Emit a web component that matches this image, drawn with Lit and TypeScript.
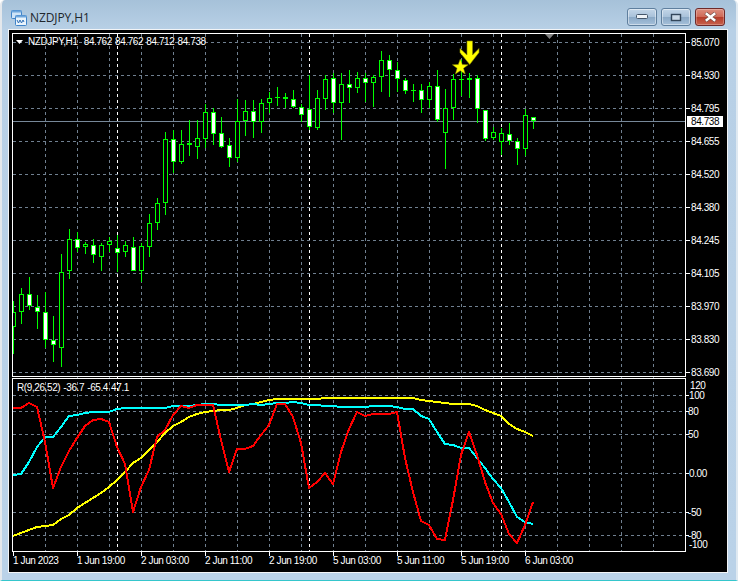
import { LitElement, html, svg, css } from "lit";
import { customElement } from "lit/decorators.js";

// [wickTop, wickBottom, bodyTop, bodyBottom, filled(1)/hollow(0)]
const CANDLES: number[][] = [
  [301,354,312,327,0],[288,324,294,312,0],[277,310,294,306,1],[295,329,307,312,1],[292,348,312,340,1],
  [316,362,340,345,1],[254,367,272,348,0],[229,279,239,271,0],[232,252,239,248,1],[242,254,244,247,0],
  [239,263,245,255,1],[243,271,245,257,0],[237,252,241,245,0],[235,272,248,253,1],[241,257,245,252,0],
  [237,271,247,271,1],[243,282,246,271,0],[214,257,223,247,0],[198,230,203,223,0],[132,215,139,203,0],
  [130,173,139,162,1],[130,164,144,162,0],[120,156,143,145,1],[120,159,138,147,0],[104,148,112,139,0],
  [108,145,112,134,1],[117,148,133,147,1],[138,167,145,158,1],[99,162,121,158,0],[100,136,111,121,0],
  [100,138,111,122,1],[99,133,103,122,0],[92,113,98,103,0],[87,106,97,97,0],[93,108,97,99,1],
  [90,108,99,107,1],[104,122,107,115,1],[75,130,109,127,1],[90,130,98,128,0],[75,110,79,99,0],
  [73,113,78,103,1],[73,140,84,103,0],[70,103,84,88,1],[72,93,78,88,0],[73,102,78,83,1],
  [75,107,77,83,0],[51,92,60,77,0],[55,97,60,70,1],[62,92,70,79,1],[78,94,80,91,1],
  [84,102,90,90,0],[84,113,90,100,1],[82,108,86,100,0],[70,122,86,120,1],[89,169,108,133,0],
  [74,120,79,108,0],[60,96,79,79,0],[73,98,78,80,1],[75,123,78,109,1],[110,141,110,139,1],
  [127,140,132,138,0],[128,155,133,142,0],[123,145,134,141,1],[138,165,141,149,1],[109,156,115,149,0],
  [117,129,117,121,1],
];

const RED = [408,408,403,407,442,488,467,451,438,426,420,419,422,447,464,512,487,470,437,430,415,406,408,405,405,405,440,472,449,449,446,435,425,404,404,417,443,488,482,473,484,452,429,412,416,414,414,414,412,458,492,521,525,539,540,500,455,432,455,482,503,514,534,543,525,502];
const CYAN = [475,474,462,447,437,437,427,416,415,413,412,412,412,409,408,408,408,408,408,408,406,406,406,405,404,404,405,405,405,405,404,405,404,403,403,402,403,405,405,406,406,407,407,407,407,406,406,406,407,409,409,416,419,432,444,445,448,448,458,468,479,488,502,517,522,524];
const YELLOW = [536,533,530,527,526,525,519,515,508,503,498,493,487,480,472,463,458,450,442,433,426,422,417,414,412,411,410,410,408,405,404,402,400,399,399,399,399,399,399,398,398,398,398,398,398,398,398,398,398,398,398,400,401,402,403,404,404,404,406,410,413,416,424,429,432,436];

const xOf = (k: number) => 13 + 8 * k;
const VERT: number[] = Array.from({ length: 20 }, (_, i) => 45 + 32 * i);
const SEP = [117, 309, 501];
const PRICES: [string, number][] = [
  ["85.070",42],["84.930",75],["84.795",108],["84.655",141],["84.520",174],["84.380",207],
  ["84.245",240],["84.105",273],["83.970",306],["83.830",339],["83.690",372],
];
const SUB_GRID = [395, 411, 434, 473, 512, 535];
const SUB_LABELS: [string, number, number][] = [
  ["120",385,690],["100",395,689],["80",411,688],["50",434,688],["0.00",473,689],
  ["-50",512,688],["-80",535,688],["-100",544,689],
];
const TIMES: [string, number][] = [
  ["1 Jun 2023",13],["1 Jun 19:00",77],["2 Jun 03:00",141],["2 Jun 11:00",205],["2 Jun 19:00",269],
  ["5 Jun 03:00",333],["5 Jun 11:00",397],["5 Jun 19:00",461],["6 Jun 03:00",525],
];

const pts = (ys: number[]) => ys.map((y, k) => `${xOf(k)},${y}`).join(" ");

@customElement("app-root")
export class AppRoot extends LitElement {
  static styles = css`
    :host { display: block; }
    .window {
      width: 738px; height: 581px; box-sizing: border-box;
      display: flex; flex-direction: column;
      background: linear-gradient(180deg, #a6c1d9 0, #b8d0e6 30px, #bad2e8 100%);
      border-left: 2px solid #e4e8ec; border-right: 2px solid #dfe9f1;
      border-bottom: 1px solid #35c6cc;
      border-radius: 5px 5px 0 0;
    }
    .titlebar {
      height: 29px; flex: none; display: flex; align-items: flex-start;
      padding: 8px 11px 0 9px; box-sizing: border-box;
    }
    .app-icon { width: 16px; height: 16px; margin-top: 2px; flex: none; }
    .title {
      margin: 1px 0 0 3px; font: 12px/17px "Open Sans", "Noto Sans", sans-serif;
      color: #20262c; flex: 1; letter-spacing: -0.1px;
    }
    .buttons { display: flex; gap: 4px; }
    .btn {
      width: 30px; height: 18px; box-sizing: border-box; border-radius: 3px;
      border: 1px solid #5f7f9e; display: flex; align-items: center; justify-content: center;
      background: linear-gradient(180deg, #c3d6e8 0, #a9c2da 48%, #8ba9c6 52%, #a5c0da 100%);
      box-shadow: inset 0 0 0 1px rgba(255,255,255,.45);
    }
    .btn.close {
      border-color: #6e2a2a;
      background: linear-gradient(180deg, #dc8e7f 0, #cf6a58 48%, #b63c2a 52%, #c7614c 100%);
      box-shadow: inset 0 0 0 1px rgba(255,255,255,.25);
    }
    .frame {
      flex: none; margin-left: 6px; width: 720px; height: 544px; box-sizing: border-box;
      border: 1px solid #f2f4f6; background: #000;
    }
    .chart { display: block; width: 718px; height: 542px; }
    .crisp { shape-rendering: crispEdges; }
    .grid { stroke: #708090; stroke-width: 1; stroke-dasharray: 3 3; fill: none; }
    .sep { stroke: #fff; stroke-width: 1; stroke-dasharray: 3 3; fill: none; }
    .border { stroke: #fff; stroke-width: 1; fill: none; }
    .bid { stroke: #778899; stroke-width: 1; }
    .tick { stroke: #fff; stroke-width: 1; }
    .wick { fill: #00ff00; }
    .body-line { fill: #00ff00; }
    .fill-bull { fill: #fff; }
    .fill-bear { fill: #000; }
    .ind { fill: none; stroke-width: 2; stroke-linejoin: round; }
    .red { stroke: #ff0000; }
    .cyan { stroke: #00ffff; }
    .yellow { stroke: #ffff00; }
    .lbl {
      font: 10px "Liberation Sans", Arial, sans-serif; fill: #fff;
      letter-spacing: -0.4px; dominant-baseline: central;
    }
    .legend { word-spacing: 0.7px; }
    .tag { fill: #fff; }
    .tag-text { fill: #000; }
    .arrow { fill: #ffff00; stroke: #8a8a00; stroke-width: 0.6; }
    .star { fill: #ffff00; stroke: #8a8a00; stroke-width: 0.5; }
    .marker { fill: #808080; }
    .white { fill: #fff; }
  `;

  private candle(c: number[], k: number) {
    const x = xOf(k);
    const [wt, wb, bt, bb, filled] = c;
    const h = Math.max(1, bb - bt);
    return svg`
      <rect class="wick" x=${x} y=${wt} width="1" height=${wb - wt}></rect>
      <rect class="body-line" x=${x - 2} y=${bt} width="5" height=${h}></rect>
      ${h > 2
        ? svg`<rect class=${filled ? "fill-bull" : "fill-bear"} x=${x - 1} y=${bt + 1} width="3" height=${h - 2}></rect>`
        : ""}
    `;
  }

  private chart() {
    return svg`
      <svg class="chart" viewBox="9 30 718 542" xmlns="http://www.w3.org/2000/svg">
        <defs>
          <clipPath id="main"><rect x="13" y="34" width="672" height="342"></rect></clipPath>
          <clipPath id="sub"><rect x="13" y="379" width="672" height="172"></rect></clipPath>
        </defs>
        <g class="crisp">
          ${VERT.map((x) => svg`<line class="grid" x1=${x + 0.5} y1="34" x2=${x + 0.5} y2="551"></line>`)}
          ${SEP.map((x) => svg`<line class="sep" x1=${x + 0.5} y1="34" x2=${x + 0.5} y2="551"></line>`)}
          ${PRICES.map(([, y]) => svg`
            <line class="grid" x1="13" y1=${y + 0.5} x2="685" y2=${y + 0.5}></line>
            <line class="tick" x1="686" y1=${y + 0.5} x2="690" y2=${y + 0.5}></line>`)}
          ${SUB_GRID.map((y) => svg`
            <line class="grid" x1="13" y1=${y + 0.5} x2="685" y2=${y + 0.5}></line>
            <line class="tick" x1="686" y1=${y + 0.5} x2="689" y2=${y + 0.5}></line>`)}
          <line class="bid" x1="13" y1="121.5" x2="686" y2="121.5"></line>
          <g clip-path="url(#main)">${CANDLES.map((c, k) => this.candle(c, k))}</g>
          <rect class="border" x="12.5" y="33.5" width="673" height="343"></rect>
          <rect class="border" x="12.5" y="378.5" width="673" height="173"></rect>
          ${TIMES.map(([, x]) => svg`<line class="tick" x1=${x + 0.5} y1="552" x2=${x + 0.5} y2="556"></line>`)}
        </g>
        <g clip-path="url(#sub)" class="crisp">
          <polyline class="ind yellow" points=${pts(YELLOW)}></polyline>
          <polyline class="ind cyan" points=${pts(CYAN)}></polyline>
          <polyline class="ind red" points=${pts(RED)}></polyline>
        </g>
        <polygon class="marker" points="545,34 554,34 549.5,39"></polygon>
        <polygon class="white" points="16,40 23,40 19.5,44"></polygon>
        <text class="lbl legend" x="28" y="41" xml:space="preserve">NZDJPY,H1  84.762 84.762 84.712 84.738</text>
        <text class="lbl legend" x="17" y="387">R(9,26,52) -36.7 -65.4 47.1</text>
        <polygon class="arrow" points="467,41 472.5,41 472.5,55 479,48.5 479,52.5 469.7,64.5 460,52.5 460,48.5 467,55"></polygon>
        <polygon class="star" points="460.3,59 462.3,64.6 468.2,64.8 463.5,68.3 465.2,74 460.3,70.7 455.4,74 457.1,68.3 452.4,64.8 458.3,64.6"></polygon>
        ${PRICES.map(([t, y]) => svg`<text class="lbl" x="691" y=${y + 0.5}>${t}</text>`)}
        <rect class="tag crisp" x="687" y="116" width="36" height="11"></rect>
        <text class="lbl tag-text" x="691" y="121.5">84.738</text>
        ${SUB_LABELS.map(([t, y, x]) => svg`<text class="lbl" x=${x} y=${y + 0.5}>${t}</text>`)}
        ${TIMES.map(([t, x]) => svg`<text class="lbl" x=${x} y="560.5">${t}</text>`)}
      </svg>
    `;
  }

  render() {
    return html`
      <div class="window">
        <div class="titlebar">
          <svg class="app-icon" viewBox="0 0 16 16">
            <rect x="0.5" y="0.5" width="10" height="8" rx="1" fill="#cfe4f7" stroke="#3f83c9"></rect>
            <rect x="0.5" y="0.5" width="10" height="2" fill="#6ea6dc"></rect>
            <rect x="4.5" y="5.5" width="11" height="10" rx="1" fill="#eaf4fc" stroke="#3f83c9"></rect>
            <rect x="4.5" y="5.5" width="11" height="2" fill="#6ea6dc"></rect>
            <path d="M6 10l1.5 3 1.5-3 1.5 3 1.5-3 1 2" fill="none" stroke="#2f6fb5" stroke-width="1"></path>
          </svg>
          <div class="title">NZDJPY,H1</div>
          <div class="buttons">
            <div class="btn">
              <svg width="12" height="6" viewBox="0 0 12 6"><rect x="0.5" y="0.5" width="11" height="4" rx="1" fill="#eef3f8" stroke="#44566a"></rect></svg>
            </div>
            <div class="btn">
              <svg width="12" height="9" viewBox="0 0 12 9"><rect x="1.5" y="1.5" width="9" height="6" fill="#c9d8e6" stroke="#33465a" stroke-width="1.4"></rect></svg>
            </div>
            <div class="btn close">
              <svg width="13" height="10" viewBox="0 0 13 10"><path d="M1.5 1l10 8M11.5 1l-10 8" stroke="#6e4a44" stroke-width="3.6"></path><path d="M1.8 1.2l9.4 7.6M11.2 1.2l-9.4 7.6" stroke="#fff" stroke-width="2.4"></path></svg>
            </div>
          </div>
        </div>
        <div class="frame">${this.chart()}</div>
      </div>
    `;
  }
}
